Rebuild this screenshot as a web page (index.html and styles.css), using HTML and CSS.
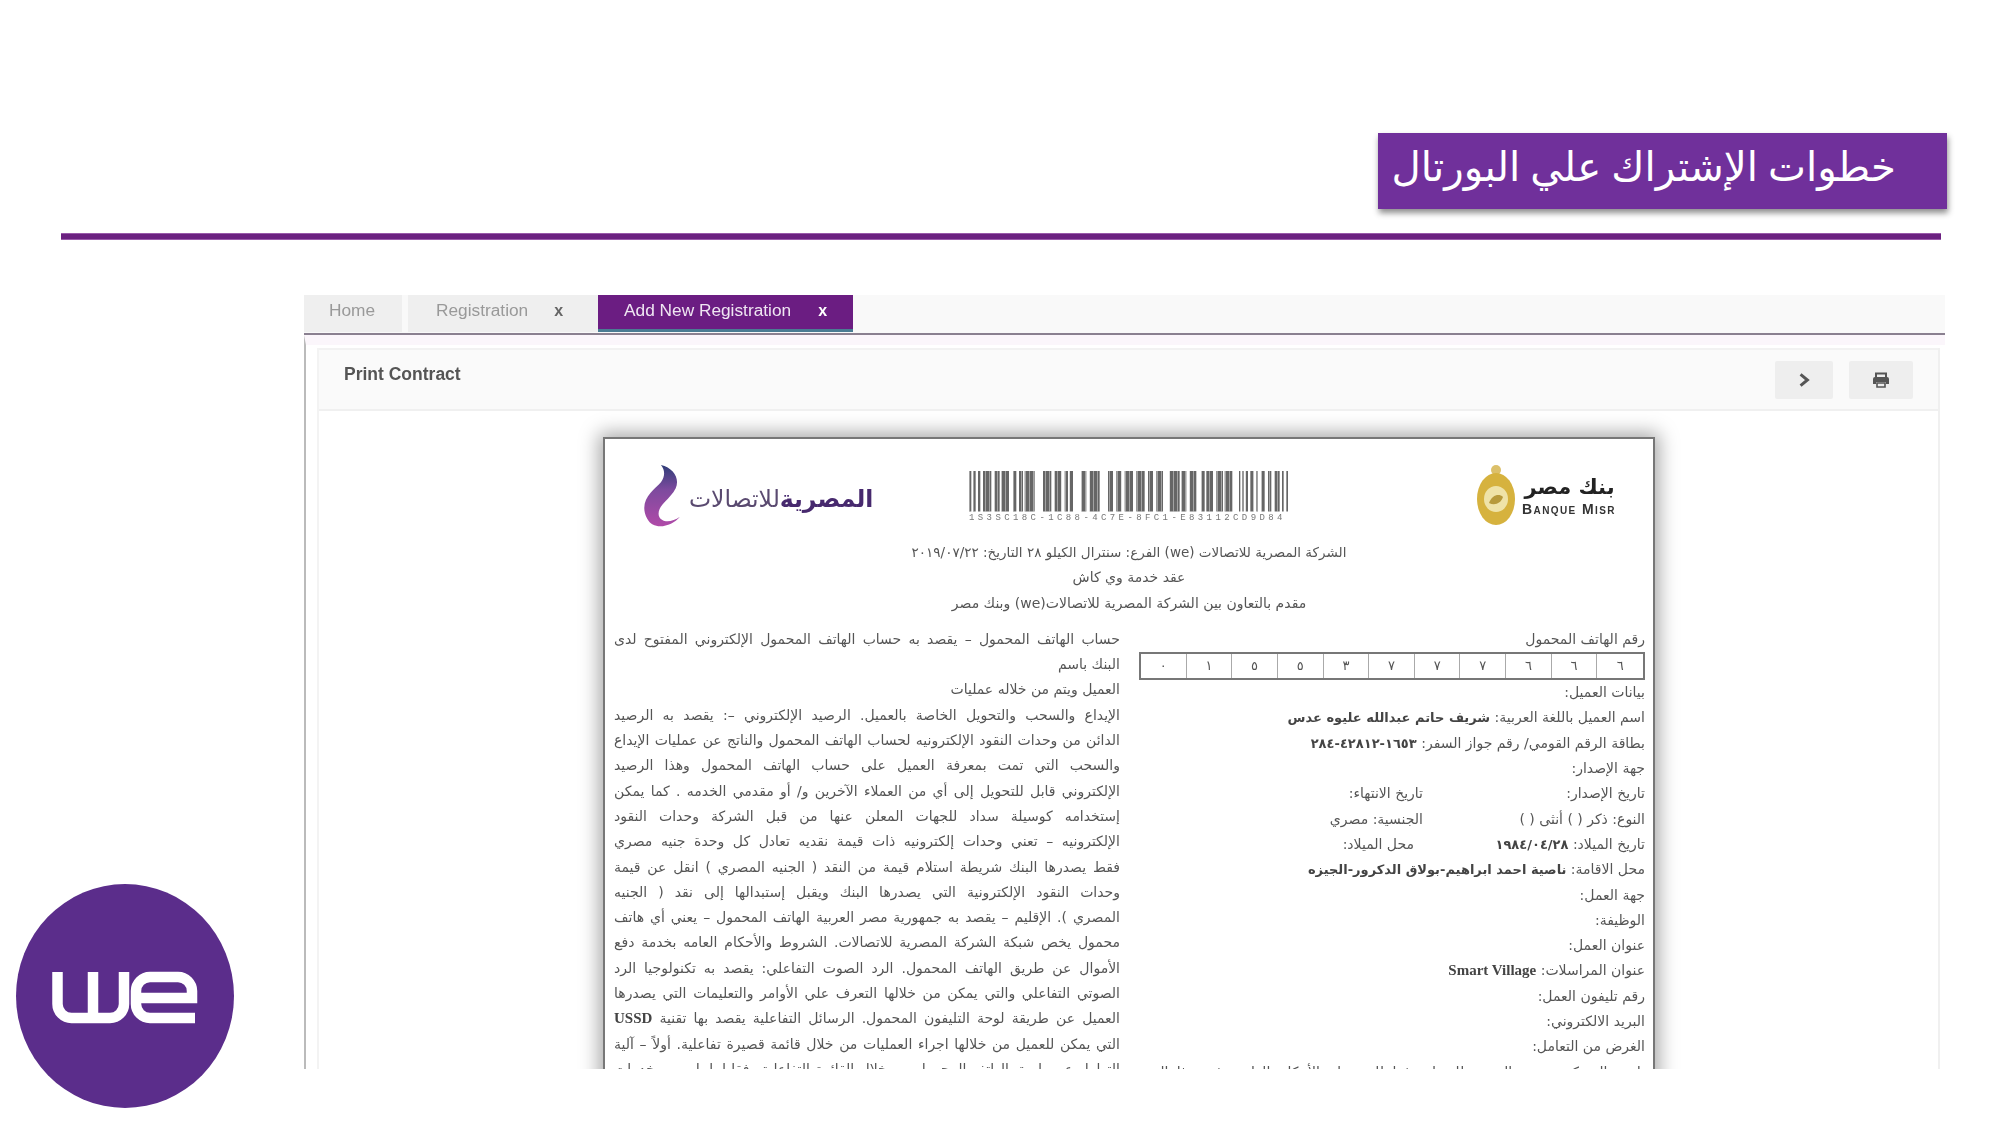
FILE: index.html
```html
<!DOCTYPE html>
<html lang="ar">
<head>
<meta charset="utf-8">
<title>خطوات الإشتراك علي البورتال</title>
<link rel="stylesheet" href="styles.css">
</head>
<body>
<main class="slide">
  <h1 class="title" dir="rtl">خطوات الإشتراك علي البورتال</h1>
  <div class="rule"></div>
  <section class="shot">
    <nav class="tabs">
      <div class="tab tab-home">Home</div>
      <div class="tab tab-reg"><span>Registration</span><b class="close">x</b></div>
      <div class="tab tab-active"><span>Add New Registration</span><b class="close">x</b></div>
    </nav>
    <div class="pane">
      <div class="panel">
        <header class="toolbar">
          <strong class="toolbar-title">Print Contract</strong>
          <div class="actions">
            <button class="btn btn-next"><svg width="14" height="16" viewBox="0 0 12 14"><path d="M3 2l6 5-6 5" fill="none" stroke="#555" stroke-width="2.6"/></svg></button>
            <button class="btn btn-print"><svg width="18" height="16" viewBox="0 0 18 16"><path d="M4 5V1.5h10V5" fill="none" stroke="#555" stroke-width="2"/><path d="M3 5h12a2 2 0 0 1 2 2v5h-3v-2H4v2H1V7a2 2 0 0 1 2-2z" fill="#555"/><path d="M5 11h8v4H5z" fill="none" stroke="#555" stroke-width="1.6"/></svg></button>
          </div>
        </header>
        <div class="panel-body">
          <article class="doc">
            <div class="doc-head">
              <div class="we-logo">
                <svg class="swoosh" width="38" height="63" viewBox="0 0 36 62" preserveAspectRatio="none">
                  <defs><linearGradient id="sw" x1="0" y1="0" x2="0" y2="1"><stop offset="0" stop-color="#2f3d78"/><stop offset=".4" stop-color="#7d4a9e"/><stop offset="1" stop-color="#b04aa8"/></linearGradient></defs>
                  <path d="M17 0C29 3 35 13 31 23 25 35 13 40 15 50 17 57 27 57 35 51 27 61 10 65 4 53-5 35 10 25 17 17 21 11 21 5 17 0Z" fill="url(#sw)"/>
                </svg>
                <div class="we-name" dir="rtl"><b>المصرية</b><span>للاتصالات</span></div>
              </div>
              <div class="barcode">
                <svg width="319" height="41" viewBox="0 0 957 41" preserveAspectRatio="none">
                  <line x1="0" y1="20" x2="957" y2="20" stroke="#666" stroke-width="41" stroke-dasharray="7 5 8 7 7 8 25 10 15 5 23 12 10 8 12 5 30 25 25 10 20 10 10 5 10 25 15 10 30 25 15 10 15 10 25 10 25 10 15 10 20 20 30 5 15 10 20 15 10 5 20 10 20 5 23 20 4 6 4 6 7 7 10 8 5 10 10 10 10 10 15"/>
                  <line x1="0" y1="20" x2="957" y2="20" stroke="#fff" stroke-opacity=".4" stroke-width="41" stroke-dasharray="3 9"/>
                </svg>
                <div class="barcode-text">1S3SC18C-1C88-4C7E-8FC1-E83112CD9D84</div>
              </div>
              <div class="bank-logo">
                <svg width="40" height="64" viewBox="0 0 40 64">
                  <circle cx="20" cy="7" r="5" fill="#dcc06a"/>
                  <ellipse cx="20" cy="36" rx="19" ry="26" fill="#d6b23e"/>
                  <ellipse cx="20" cy="36" rx="12" ry="13" fill="#efe3a8"/>
                  <path d="M13 40c3-8 10-10 14-6-2 6-8 9-14 6z" fill="#b79a3c"/>
                </svg>
                <div class="bank-name">
                  <div class="bank-ar" dir="rtl">بنك مصر</div>
                  <div class="bank-en">Banque Misr</div>
                </div>
              </div>
            </div>
            <div class="doc-intro" dir="rtl">
              <div class="ln ln-tight">الشركة المصرية للاتصالات (we) الفرع: سنترال الكيلو ٢٨ التاريخ: ٢٠١٩/٠٧/٢٢</div>
              <div class="ln">عقد خدمة وي كاش</div>
              <div class="ln">مقدم بالتعاون بين الشركة المصرية للاتصالات(we) وبنك مصر</div>
            </div>
            <div class="doc-cols" dir="rtl">
              <div class="col col-right">
                <div class="ln">رقم الهاتف المحمول</div>
                <div class="digits"><span>٦</span><span>٦</span><span>٦</span><span>٧</span><span>٧</span><span>٧</span><span>٣</span><span>٥</span><span>٥</span><span>١</span><span>٠</span></div>
                <div class="ln">بيانات العميل:</div>
                <div class="ln">اسم العميل باللغة العربية: <b>شريف حاتم عبدالله عليوه عدس</b></div>
                <div class="ln">بطاقة الرقم القومي/ رقم جواز السفر: <b>١٦٥٣-٤٢٨١٢-٢٨٤</b></div>
                <div class="ln">جهة الإصدار:</div>
                <div class="ln pair"><span class="cell-a">تاريخ الإصدار:</span><span>تاريخ الانتهاء:</span></div>
                <div class="ln pair"><span class="cell-a">النوع: ذكر ( ) أنثى ( )</span><span>الجنسية: مصري</span></div>
                <div class="ln pair"><span class="cell-a cell-wide">تاريخ الميلاد: <b>١٩٨٤/٠٤/٢٨</b></span><span>محل الميلاد:</span></div>
                <div class="ln">محل الاقامة: <b>ناصية احمد ابراهيم-بولاق الدكرور-الجيزه</b></div>
                <div class="ln">جهة العمل:</div>
                <div class="ln">الوظيفة:</div>
                <div class="ln">عنوان العمل:</div>
                <div class="ln">عنوان المراسلات: <b class="latin">Smart Village</b></div>
                <div class="ln">رقم تليفون العمل:</div>
                <div class="ln">البريد الالكتروني:</div>
                <div class="ln">الغرض من التعامل:</div>
                <div class="ln just">تلتزم الشركة بتقديم الخدمة للعميل وفقا للشروط والأحكام الواردة في هذا العقد</div>
              </div>
              <div class="col col-left">
                <div class="ln just">حساب الهاتف المحمول – يقصد به حساب الهاتف المحمول الإلكتروني المفتوح لدى</div>
                <div class="ln">البنك باسم</div>
                <div class="ln">العميل ويتم من خلاله عمليات</div>
                <div class="ln just">الإيداع والسحب والتحويل الخاصة بالعميل. الرصيد الإلكتروني –: يقصد به الرصيد</div>
                <div class="ln just">الدائن من وحدات النقود الإلكترونيه لحساب الهاتف المحمول والناتج عن عمليات الإيداع</div>
                <div class="ln just">والسحب التي تمت بمعرفة العميل على حساب الهاتف المحمول وهذا الرصيد</div>
                <div class="ln just">الإلكتروني قابل للتحويل إلى أي من العملاء الآخرين و/ أو مقدمي الخدمه . كما يمكن</div>
                <div class="ln just">إستخدامه كوسيلة سداد للجهات المعلن عنها من قبل الشركة وحدات النقود</div>
                <div class="ln just">الإلكترونيه – تعني وحدات إلكترونيه ذات قيمة نقديه تعادل كل وحدة جنيه مصري</div>
                <div class="ln just">فقط يصدرها البنك شريطة استلام قيمة من النقد ( الجنيه المصري ) انقل عن قيمة</div>
                <div class="ln just">وحدات النقود الإلكترونية التي يصدرها البنك ويقبل إستبدالها إلى نقد ( الجنيه</div>
                <div class="ln just">المصري ). الإقليم – يقصد به جمهورية مصر العربية الهاتف المحمول – يعني أي هاتف</div>
                <div class="ln just">محمول يخص شبكة الشركة المصرية للاتصالات. الشروط والأحكام العامه بخدمة دفع</div>
                <div class="ln just">الأموال عن طريق الهاتف المحمول. الرد الصوت التفاعلي: يقصد به تكنولوجيا الرد</div>
                <div class="ln just">الصوتي التفاعلي والتي يمكن من خلالها التعرف علي الأوامر والتعليمات التي يصدرها</div>
                <div class="ln just">العميل عن طريقة لوحة التليفون المحمول. الرسائل التفاعلية يقصد بها تقنية <b class="latin">USSD</b></div>
                <div class="ln just">التي يمكن للعميل من خلالها اجراء العمليات من خلال قائمة قصيرة تفاعلية. أولاً – آلية</div>
                <div class="ln just">التعامل عن طريق الهاتف المحمول من خلال القائمة التفاعلية وفقا لما يلي من خدمات</div>
              </div>
            </div>
          </article>
        </div>
      </div>
    </div>
  </section>
  <svg class="brand" width="222" height="226" viewBox="0 0 222 226" role="img" aria-label="we">
    <ellipse cx="111" cy="113" rx="109" ry="112" fill="#5b2d8b"/>
    <path d="M43.5 89V121a14 14 0 0 0 14 14H96a14 14 0 0 0 14-14V89M79 89V135" fill="none" stroke="#fff" stroke-width="10.5"/>
    <path d="M122 115H178V108a14 14 0 0 0-14-14H136a14 14 0 0 0-14 14V121a14 14 0 0 0 14 14H181" fill="none" stroke="#fff" stroke-width="10.5"/>
  </svg>
</main>
</body>
</html>
```
FILE: styles.css
```css
* { box-sizing: border-box; }
html, body { margin: 0; padding: 0; background: #fff; }
body { width: 2000px; height: 1125px; overflow: hidden; font-family: "Liberation Sans", Arial, sans-serif; }
.slide { position: relative; width: 2000px; height: 1125px; padding-top: 133px; }

.title {
  margin: 0 0 0 1378px; width: 569px; height: 76px; padding: 0 51px 0 0;
  background: #70309b; color: #fff; font-family: "Liberation Serif", "DejaVu Sans", serif;
  font-weight: 400; font-size: 40.3px; line-height: 70px; text-align: right; white-space: nowrap;
  box-shadow: 1px 4px 6px rgba(0,0,0,.45);
}
.rule { margin: 24px 0 0 61px; width: 1880px; height: 7px; background: #6b2180; border-top: 1px solid #9a5aaa; border-bottom: 1px solid #9a5aaa; }

.shot { display: flex; flex-direction: column; margin: 55px 0 0 304px; width: 1641px; height: 774px; overflow: hidden; filter: blur(.7px); }
.tabs { display: flex; flex: none; height: 40px; padding-bottom: 1px; background: #f9f9f9; border-bottom: 2px solid #8a8090; font-size: 17.3px; line-height: 31px; }
.tab { display: flex; height: 37px; white-space: nowrap; color: #999; background: #efefef; }
.tab-home { width: 98px; padding-left: 25px; margin-right: 6px; }
.tab-reg { width: 190px; padding-left: 28px; }
.tab-active { width: 255px; padding-left: 26px; background: #6b1d82; color: #efe6f2; border-bottom: 3px solid #4a7c93; }
.close { font-size: 16px; color: #666; }
.tab-reg .close { margin-left: 26px; }
.tab-active .close { margin-left: 27px; color: #fff; }

.pane { flex: 1; min-height: 0; padding: 3px 5px 0 11px; border-left: 2px solid #bbb; background: #fff; border-top: 10px solid #fbf6fb; }
.panel { height: 100%; border-left: 2px solid #f3f3f3; border-right: 2px solid #f0f0f0; }
.toolbar { display: flex; justify-content: space-between; align-items: center; height: 63px; padding: 0 25px 0 25px; background: #fafafa; border-top: 2px solid #f2f2f2; border-bottom: 2px solid #f0f0f0; }
.toolbar-title { font-size: 17.5px; color: #555; margin-top: -11px; }
.actions { display: flex; gap: 16px; margin-top: 1px; }
.btn { display: flex; align-items: center; justify-content: center; width: 58px; height: 38px; padding: 0; border: 0; border-radius: 2px; background: #eee; }
.btn-print { width: 64px; }

.panel-body { padding: 26px 0 0 284px; }
.doc { width: 1052px; height: 700px; background: #fff; border: 2px solid #777; border-bottom: 0; box-shadow: 0 0 18px 4px rgba(0,0,0,.35); font-family: "DejaVu Sans", sans-serif; font-size: 14px; color: #555; }

.doc-head { display: flex; align-items: flex-start; height: 101px; padding: 26px 0 0 38px; }
.we-logo { display: flex; align-items: center; width: 326px; }
.swoosh { flex: none; margin-right: 8px; }
.we-name { font-size: 23.5px; color: #5a4a70; white-space: nowrap; display: flex; margin-top: 4px; }
.we-name b { color: #47296e; }
.barcode { width: 319px; margin-top: 6px; }
.barcode svg { display: block; }
.barcode-text { font: 9px/13px "Liberation Mono", monospace; letter-spacing: 3.4px; color: #777; white-space: nowrap; }
.bank-logo { display: flex; align-items: center; margin: -2px 0 0 188px; }
.bank-name { margin-left: 6px; width: 95px; }
.bank-ar { font-size: 21px; line-height: 28px; font-weight: 700; color: #222; text-align: center; white-space: nowrap; }
.bank-en { font: 700 14px/16px "Liberation Sans", sans-serif; font-variant: small-caps; letter-spacing: 1.4px; color: #333; white-space: nowrap; }

.ln { height: 25.3px; line-height: 25.3px; white-space: nowrap; }
.ln-tight { font-size: 13.5px; }
.doc-intro { text-align: center; margin-bottom: 11px; }
.doc-cols { display: flex; gap: 19px; padding: 0 8px 0 8px; }
.col-right { width: 506px; flex: none; }
.col-left { width: 506px; flex: none; }
.just { text-align: justify; text-align-last: justify; white-space: normal; overflow: hidden; }
.ln b { font-weight: 700; font-size: 13px; color: #444; }
.ln .latin { font-family: "Liberation Serif", serif; font-size: 15px; }
.pair { display: flex; }
.cell-a { width: 222px; flex: none; }
.cell-wide { width: 231px; }
.digits { display: grid; grid-template-columns: repeat(11, 1fr); height: 28px; border: 2px solid #777; font-size: 13px; line-height: 24px; text-align: center; color: #555; }
.digits span + span { border-right: 1px solid #aaa; }

.brand { position: absolute; left: 14px; top: 883px; filter: blur(.5px); }
```
